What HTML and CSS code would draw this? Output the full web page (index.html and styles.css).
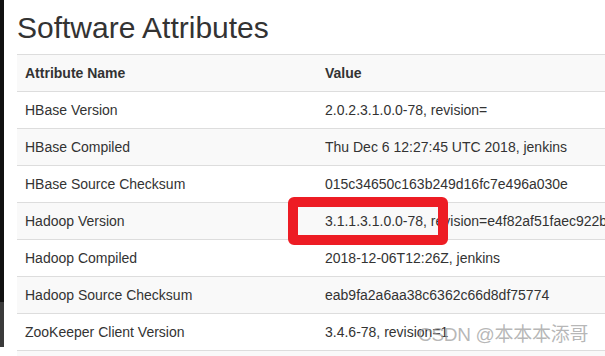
FILE: index.html
```html
<!DOCTYPE html>
<html lang="en">
<head>
    <meta charset="UTF-8">
    <title>HBase - Software Attributes</title>
    <link rel="stylesheet" href="styles.css">
</head>
<body>
    <div class="layout">
        <div class="edge">
            <div class="edge-dark"></div>
            <div class="edge-gray"></div>
        </div>
        <div class="content">
            <h1>Software Attributes</h1>
            <div class="table-wrap">
                <table class="attr-table">
                    <colgroup>
                        <col class="col-name">
                        <col class="col-value">
                    </colgroup>
                    <tr>
                        <th>Attribute Name</th>
                        <th>Value</th>
                    </tr>
                    <tr>
                        <td>HBase Version</td>
                        <td>2.0.2.3.1.0.0-78, revision=</td>
                    </tr>
                    <tr>
                        <td>HBase Compiled</td>
                        <td>Thu Dec 6 12:27:45 UTC 2018, jenkins</td>
                    </tr>
                    <tr>
                        <td>HBase Source Checksum</td>
                        <td>015c34650c163b249d16fc7e496a030e</td>
                    </tr>
                    <tr>
                        <td>Hadoop Version</td>
                        <td>3.1.1.3.1.0.0-78, revision=e4f82af51faec922b</td>
                    </tr>
                    <tr>
                        <td>Hadoop Compiled</td>
                        <td>2018-12-06T12:26Z, jenkins</td>
                    </tr>
                    <tr>
                        <td>Hadoop Source Checksum</td>
                        <td>eab9fa2a6aa38c6362c66d8df75774</td>
                    </tr>
                    <tr>
                        <td>ZooKeeper Client Version</td>
                        <td>3.4.6-78, revision=1</td>
                    </tr>
                    <tr class="row-partial">
                        <td></td>
                        <td></td>
                    </tr>
                </table>
                <div class="mark-box"></div>
            </div>
        </div>
    </div>
    <div class="watermark">CSDN @本本本添哥</div>
</body>
</html>
```

FILE: styles.css
```css
* {
    box-sizing: border-box;
    margin: 0;
    padding: 0;
}

html, body {
    width: 605px;
    height: 356px;
    overflow: hidden;
}

body {
    font-family: "Liberation Sans", Arial, sans-serif;
    font-size: 14px;
    line-height: 20px;
    color: #333;
    background-color: white;
    position: relative;
}

.layout {
    display: flex;
    height: 356px;
}

.edge {
    width: 4px;
    flex-shrink: 0;
    display: flex;
    flex-direction: column;
}

.edge-dark {
    height: 302px;
    background-color: #111;
}

.edge-gray {
    height: 45px;
    background-color: #3a3a3a;
}

.content {
    padding-left: 13px;
    flex: 1;
    min-width: 0;
}

h1 {
    font-size: 30px;
    line-height: 33px;
    font-weight: normal;
    margin: 11px 0 10px;
    color: #333;
}

.table-wrap {
    position: relative;
    overflow: hidden;
}

.attr-table {
    width: 588px;
    table-layout: fixed;
    border-collapse: collapse;
}

.col-name {
    width: 300px;
}

.attr-table th,
.attr-table td {
    padding: 8px;
    text-align: left;
    border-top: 1px solid #ddd;
    white-space: nowrap;
    overflow: hidden;
    vertical-align: top;
}

.attr-table th {
    font-weight: bold;
}

.attr-table tr:nth-child(odd) {
    background-color: #f9f9f9;
}

.row-partial td {
    height: 37px;
}

.mark-box {
    position: absolute;
    left: 271px;
    top: 143px;
    width: 160px;
    height: 48px;
    border: 10px solid #ed1c24;
    border-radius: 6px;
}

.watermark {
    position: absolute;
    left: 418px;
    top: 323px;
    font-family: "Liberation Sans", "Noto Sans CJK SC", sans-serif;
    font-size: 19px;
    line-height: 24px;
    color: rgba(160, 160, 160, 0.75);
    letter-spacing: -0.3px;
}
```
